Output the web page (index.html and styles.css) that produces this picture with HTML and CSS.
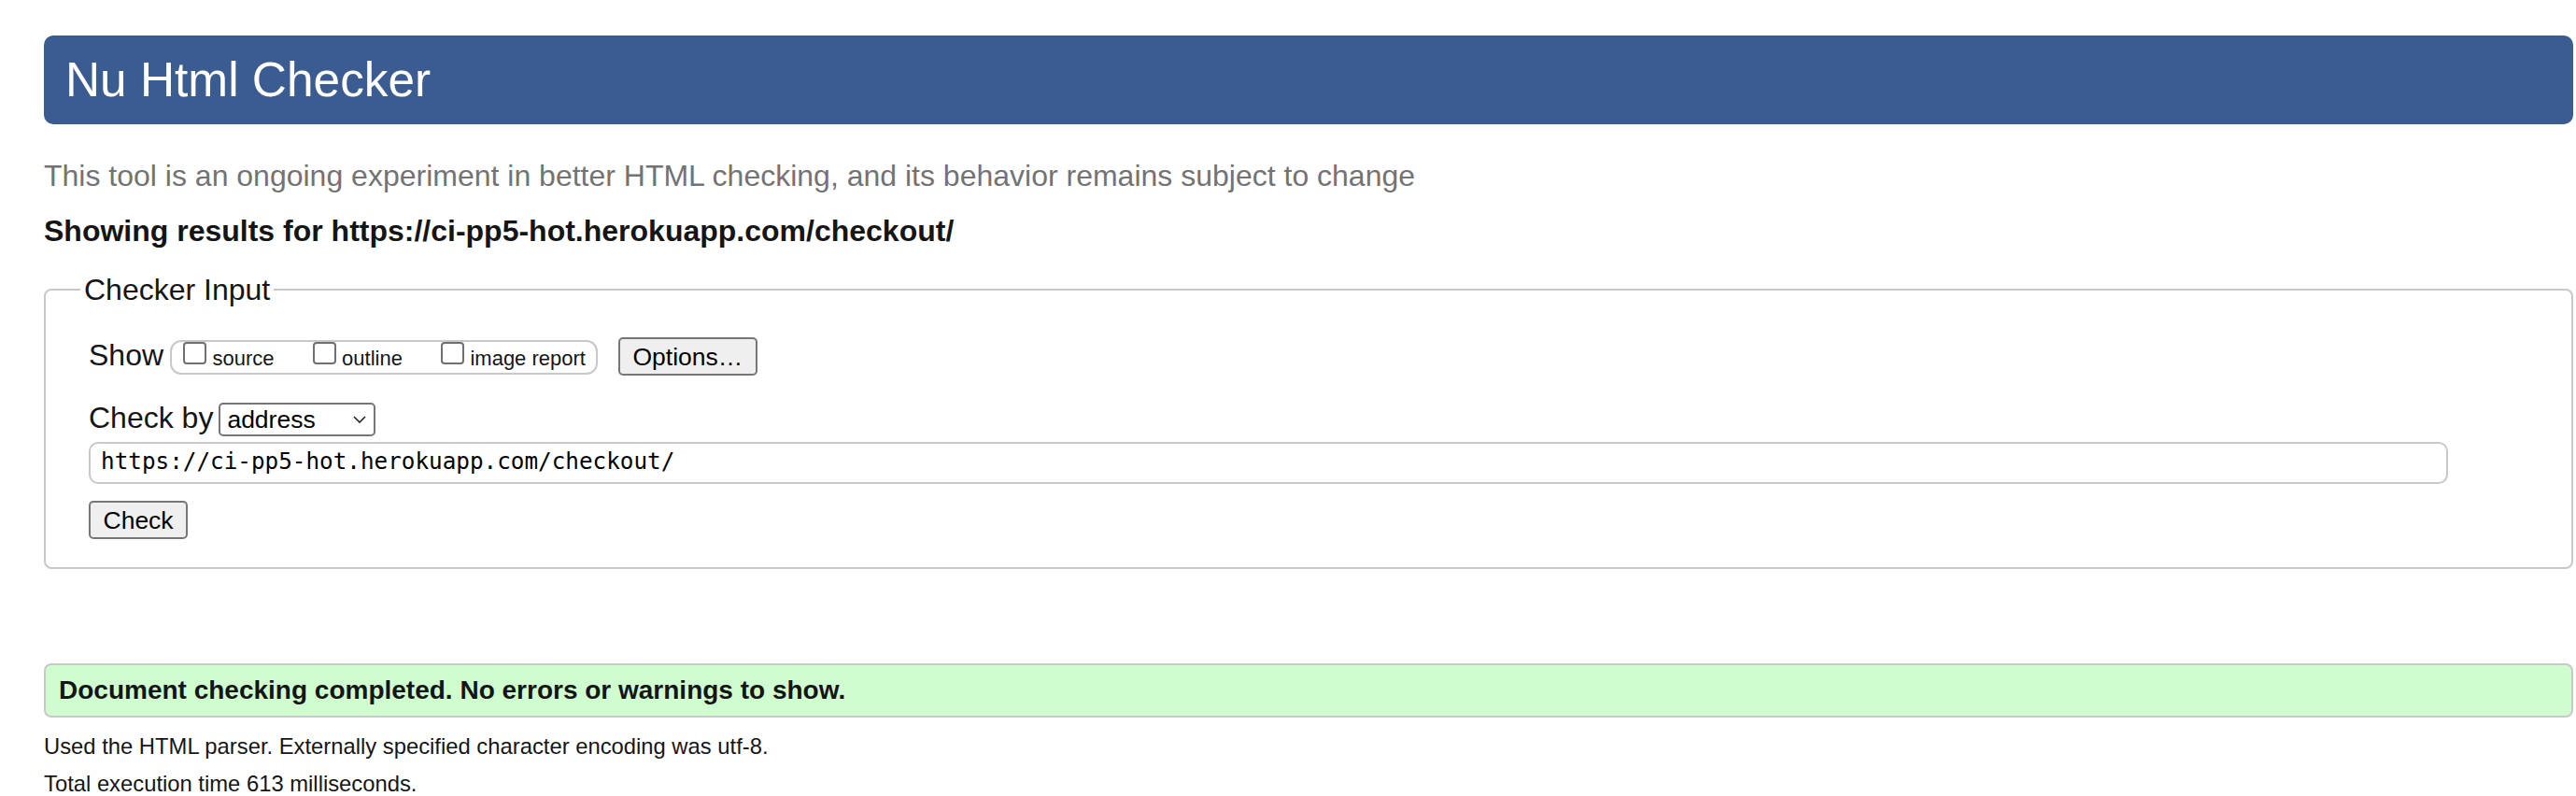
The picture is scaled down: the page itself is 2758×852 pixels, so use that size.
FILE: index.html
```html
<!DOCTYPE html>
<html lang="en">
<head>
<meta charset="utf-8">
<title>Nu Html Checker</title>
<link rel="stylesheet" href="styles.css">
</head>
<body>
<div class="page">
  <h1 class="banner">Nu Html Checker</h1>
  <p class="tagline">This tool is an ongoing experiment in better HTML checking, and its behavior remains subject to change</p>
  <p class="showing">Showing results for https://ci-pp5-hot.herokuapp.com/checkout/</p>
  <form class="form">
    <fieldset class="checker">
      <legend class="checker-legend">Checker Input</legend>
      <div class="row row-show">
        <span class="row-label">Show</span>
        <div class="show-group">
          <label class="opt"><input type="checkbox" class="cb">source</label>
          <label class="opt"><input type="checkbox" class="cb">outline</label>
          <label class="opt"><input type="checkbox" class="cb">image report</label>
        </div>
        <button type="button" class="btn">Options…</button>
      </div>
      <div class="row row-by">
        <span class="row-label">Check by</span>
        <div class="select">
          <span class="select-value">address</span>
          <svg class="chevron" width="14" height="8" viewBox="0 0 14 8"><path d="M1 1 L7 7 L13 1" fill="none" stroke="#222" stroke-width="1.6"/></svg>
        </div>
      </div>
      <div class="url">https://ci-pp5-hot.herokuapp.com/checkout/</div>
      <button type="button" class="btn btn-check">Check</button>
    </fieldset>
  </form>
  <div class="success">Document checking completed. No errors or warnings to show.</div>
  <p class="meta meta-first">Used the HTML parser. Externally specified character encoding was utf-8.</p>
  <p class="meta meta-second">Total execution time 613 milliseconds.</p>
</div>
</body>
</html>
```

FILE: styles.css
```css
html, body {
  margin: 0;
  padding: 0;
  background: #fff;
}
body {
  font-family: "Liberation Sans", Arial, sans-serif;
  color: #151515;
}
.page {
  padding: 38px 3px 0 47px;
}
.banner {
  margin: 0;
  height: 95px;
  line-height: 95px;
  padding-left: 23px;
  font-size: 51.4px;
  font-weight: normal;
  color: #fff;
  background: #3a5c91;
  border-radius: 10px;
}
.tagline {
  margin: 37px 0 0;
  font-size: 32px;
  line-height: 36px;
  color: #737373;
}
.showing {
  margin: 23px 0 0;
  font-size: 32px;
  line-height: 36px;
  font-weight: bold;
}
.form {
  margin: 27px 0 0;
}
.checker {
  margin: 0;
  min-width: 0;
  padding: 33px 0 30px 46px;
  border: 2px solid #c8c8c8;
  border-radius: 8px;
}
.checker-legend {
  font-size: 32px;
  line-height: 36px;
  padding: 0 4px;
  margin-left: -9px;
}
.row {
  display: flex;
  align-items: baseline;
}
.row-label {
  font-size: 32px;
  line-height: 36px;
  white-space: nowrap;
}
.row-show .row-label {
  margin-right: 7px;
}
.show-group {
  display: flex;
  align-items: flex-start;
  gap: 41px;
  height: 37px;
  box-sizing: border-box;
  border: 2px solid #c8c8c8;
  border-radius: 12px;
  padding: 0 11px 0 12px;
  margin-right: 22px;
}
.opt {
  font-size: 22px;
  line-height: 26px;
  white-space: nowrap;
}
.cb {
  -webkit-appearance: none;
  appearance: none;
  display: inline-block;
  width: 25px;
  height: 24px;
  box-sizing: border-box;
  margin: 0 6.5px 0 0;
  border: 2px solid #707070;
  border-radius: 4px;
  background: #fff;
  vertical-align: 1px;
}
.btn {
  font-family: "Liberation Sans", Arial, sans-serif;
  font-size: 26.5px;
  line-height: 30px;
  padding: 3.5px 13.5px;
  margin: 0;
  border: 2px solid #767676;
  border-radius: 5px;
  background: #efefef;
  color: #000;
}
.row-by {
  margin-top: 27px;
}
.row-by .row-label {
  margin-right: 6px;
}
.select {
  display: flex;
  align-items: center;
  width: 168px;
  height: 36px;
  box-sizing: border-box;
  border: 2px solid #767676;
  border-radius: 5px;
  padding-left: 7px;
  font-size: 26.5px;
  color: #000;
}
.select-value {
  line-height: 30px;
}
.chevron {
  margin-left: auto;
  margin-right: 8px;
}
.url {
  margin: 6px 132px 0 0;
  height: 45px;
  box-sizing: border-box;
  border: 2px solid #c8c8c8;
  border-radius: 10px;
  padding-left: 11px;
  font-family: "DejaVu Sans Mono", "Liberation Mono", monospace;
  font-size: 24.3px;
  line-height: 38px;
  color: #000;
}
.btn-check {
  display: block;
  margin-top: 18px;
}
.success {
  margin-top: 101px;
  height: 58px;
  box-sizing: border-box;
  border: 2px solid #c8c8c8;
  border-radius: 8px;
  background: #d0fdd0;
  padding-left: 14px;
  font-size: 28px;
  font-weight: bold;
  line-height: 54px;
}
.meta {
  margin: 0;
  font-size: 23.8px;
  line-height: 28px;
}
.meta-first {
  margin-top: 17px;
}
.meta-second {
  margin-top: 12px;
}
```
